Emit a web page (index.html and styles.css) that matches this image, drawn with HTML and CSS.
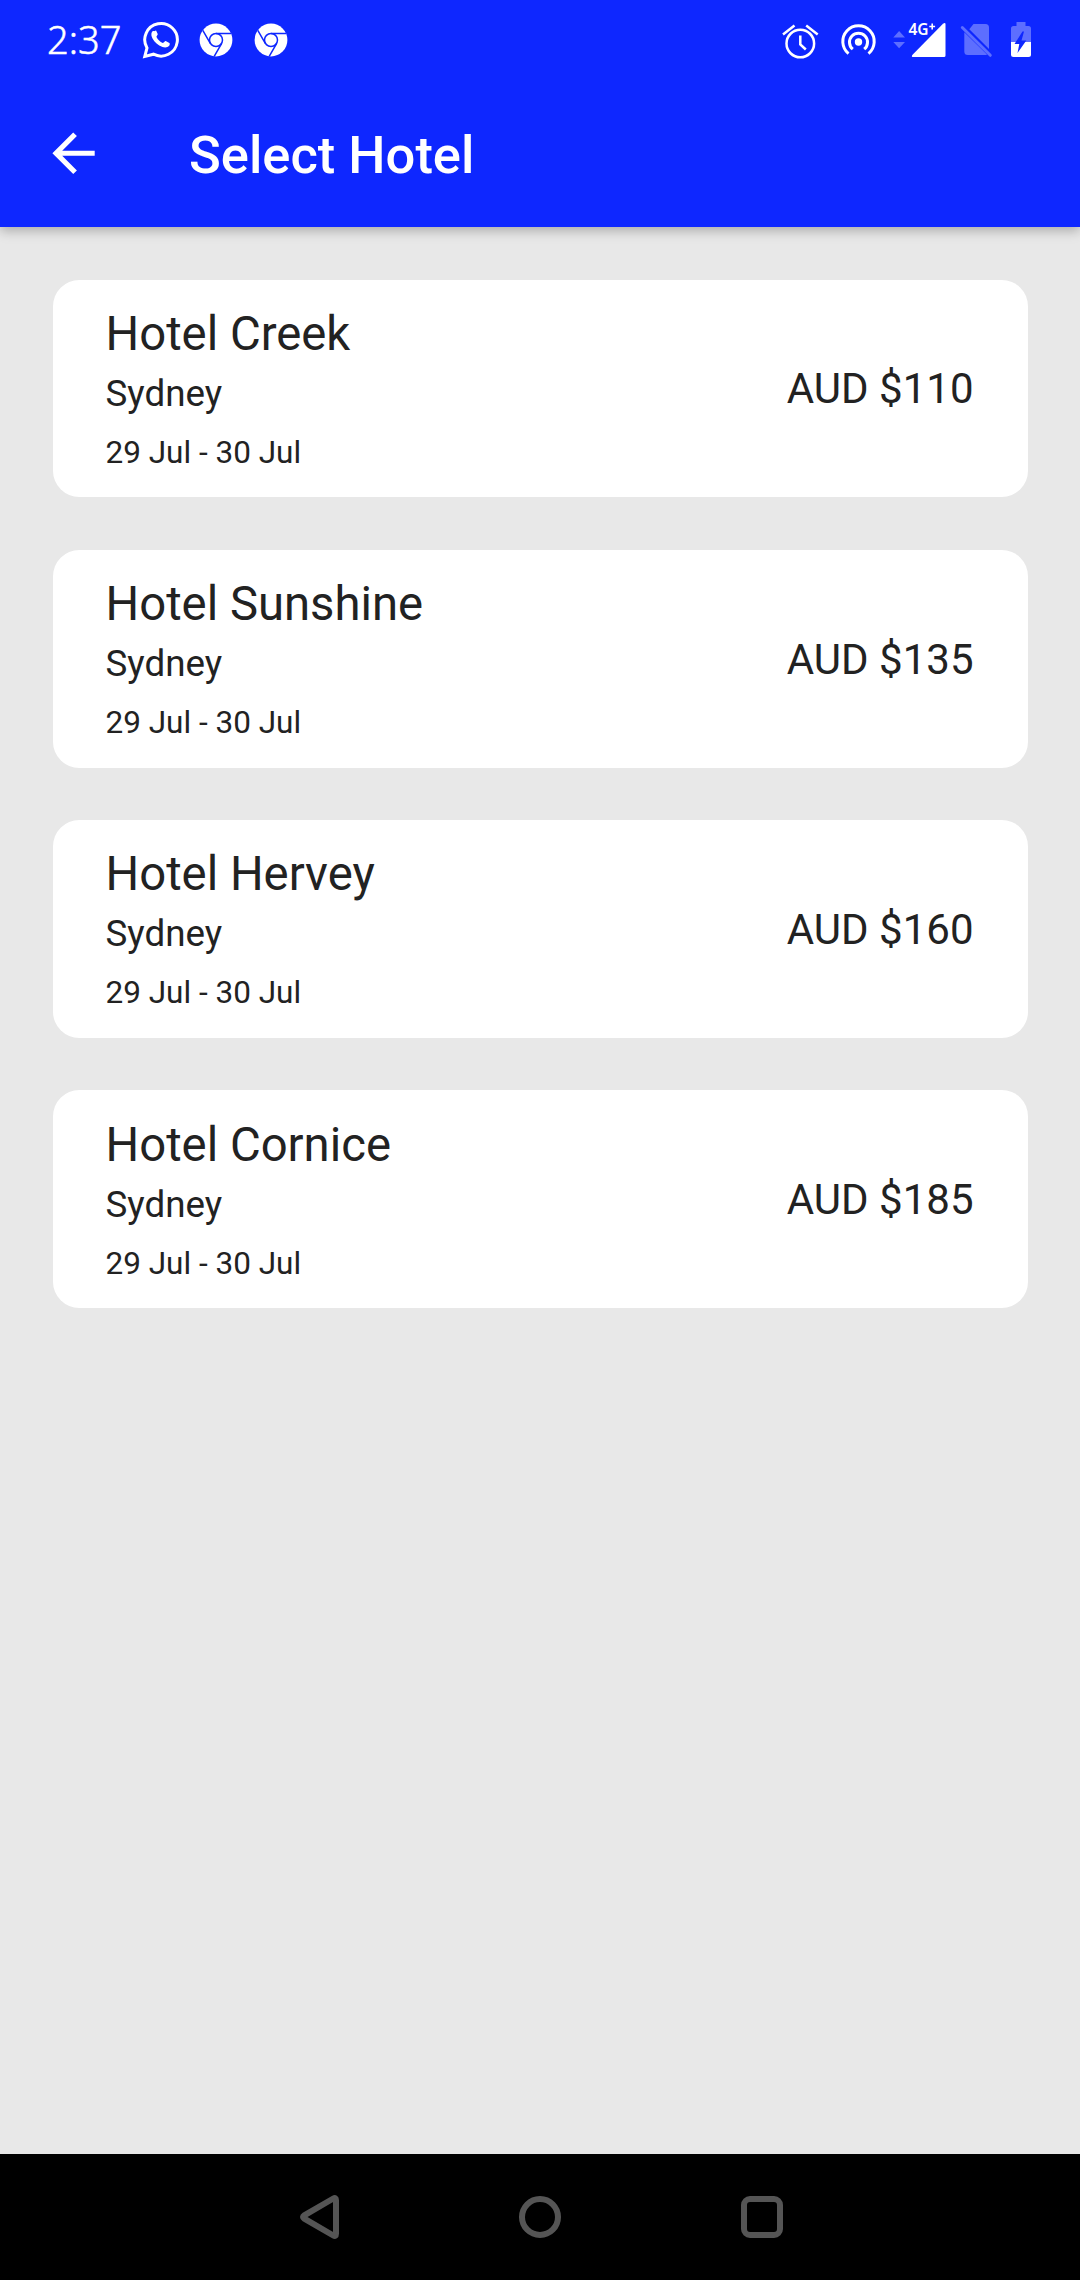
FILE: index.html
```html
<!DOCTYPE html>
<html lang="en">
<head>
<meta charset="utf-8">
<title>Select Hotel</title>
<link rel="stylesheet" href="styles.css">
</head>
<body>
<div class="screen">
  <header class="top">
    <div class="status">
      <span class="clock">2:37</span>
      <svg class="whatsapp" width="38" height="38" viewBox="0 0 38 38"><path d="M2.800 35.400 5 27A16.300 16.300 0 1 1 11.500 33.200Z" fill="none" stroke="#fff" stroke-width="3"/><path d="M12.700 10.200c-.6-.6-2.300-.2-2.700.6-1.200 2.400-.6 4.600.5 6.600 2.200 4 5.400 6.800 10 8.500 2.500.9 5.100.6 6.600-1.100.7-.8.900-2.500.3-2.900l-3.700-1.800c-.8-.3-2 2.100-2.900 1.800-2.900-1.300-4.900-3.200-6.300-6-.3-.7 1.500-2.200 1.200-3l-1.500-3.200c-.3-.5-1.100.1-1.500.5Z" fill="#fff"/></svg>
      <svg class="chrome" width="34" height="34" viewBox="0 0 34 34"><circle cx="17" cy="17" r="16.400" fill="#fff"/><g fill="none" stroke="#0e27ff" stroke-width="1.500"><circle cx="17" cy="17" r="6.500"/><path d="M17 10.500H32M11.300 20.300 3.800 7.300M22.700 20.300 15.200 33.300"/></g></svg>
      <svg class="chrome" width="34" height="34" viewBox="0 0 34 34"><circle cx="17" cy="17" r="16.400" fill="#fff"/><g fill="none" stroke="#0e27ff" stroke-width="1.500"><circle cx="17" cy="17" r="6.500"/><path d="M17 10.500H32M11.300 20.300 3.800 7.300M22.700 20.300 15.200 33.300"/></g></svg>
      <svg class="system" width="252" height="64" viewBox="780 8 252 64">
        <g fill="none" stroke="#fff" stroke-width="2.500"><circle cx="800.300" cy="43.500" r="13.800"/><path d="M800.300 35.500V44.500L805.800 49.500M783 34.500 794.500 25.500M817.700 34.500 806.200 25.500"/></g>
        <circle cx="858.500" cy="42" r="3.700" fill="#fff"/>
        <g fill="none" stroke="#fff" stroke-width="3"><path d="M852.800 49.200A9 9 0 1 1 864.200 49.200"/><path d="M848.500 53.600A15.700 15.700 0 1 1 868.500 53.600"/></g>
        <g fill="#5d6eff"><path d="M893.300 37.500H905L899.100 31ZM893.300 42H905L899.100 48.300Z"/><path d="M973.500 24H985.500Q989 24 989 27.500V49L969.300 29.300ZM964.300 32.300 987 54.500Q986.500 55 985 55H967.800Q964.300 55 964.300 51.500Z"/><path d="M962.300 27.500 990.300 55.300" stroke="#5d6eff" stroke-width="3" stroke-linecap="round"/><path d="M1011 42V28.500Q1011 26 1013.500 26H1016.500V22H1025.500V26H1028.500Q1031 26 1031 28.500V42Z"/></g>
        <path d="M943 23.800Q945.500 22 945.500 24.500V55.500Q945.500 57 944 57H913.300Q911 57 912.300 55Z" fill="#fff"/>
        <path d="M1011 42H1031V54.500Q1031 57 1028.500 57H1013.500Q1011 57 1011 54.500Z" fill="#fff"/>
        <path d="M1022.500 31.500 1014.500 44H1019.300L1017.500 53 1026.300 40.500H1021.500L1024 31.500Z" fill="#0e27ff"/>
        <text class="network" x="908.500" y="34.700">4G</text><path d="M929.300 26.500H935.100M932.200 23.400V29.600" stroke="#fff" stroke-width="1.600"/>
      </svg>
    </div>
    <div class="appbar">
      <svg class="back" width="43" height="43" viewBox="0 0 43 43"><path d="M42.700 18.800H10.200L24.900 4.100 21.200.400 .4 21.300 21.200 42.100 24.900 38.400 10.200 23.800H42.700Z" fill="#fff"/></svg>
      <h1 class="title">Select Hotel</h1>
    </div>
  </header>
  <main class="list">
    <article class="card"><div class="info"><h2 class="name">Hotel Creek</h2><p class="city">Sydney</p><p class="dates">29 Jul - 30 Jul</p></div><p class="price">AUD $110</p></article>
    <article class="card"><div class="info"><h2 class="name">Hotel Sunshine</h2><p class="city">Sydney</p><p class="dates">29 Jul - 30 Jul</p></div><p class="price">AUD $135</p></article>
    <article class="card"><div class="info"><h2 class="name">Hotel Hervey</h2><p class="city">Sydney</p><p class="dates">29 Jul - 30 Jul</p></div><p class="price">AUD $160</p></article>
    <article class="card"><div class="info"><h2 class="name">Hotel Cornice</h2><p class="city">Sydney</p><p class="dates">29 Jul - 30 Jul</p></div><p class="price">AUD $185</p></article>
  </main>
  <nav class="navbar">
    <svg width="44" height="44" viewBox="0 0 44 44"><path d="M40 5.200Q40 2 37.300 3.500L8.300 20.300Q5.700 22 8.300 23.700L37.300 40.500Q40 42 40 38.800Z"/></svg>
    <svg width="44" height="44" viewBox="0 0 44 44"><circle cx="22" cy="22" r="18"/></svg>
    <svg width="44" height="44" viewBox="0 0 44 44"><rect x="4" y="4" width="36" height="36" rx="6"/></svg>
  </nav>
</div>
</body>
</html>
```
FILE: styles.css
```css
* { box-sizing: border-box; margin: 0; padding: 0; }
body { font-family: Roboto, sans-serif; color: #222; }
svg { display: block; flex: none; }
.screen { width: 1080px; height: 2280px; display: flex; flex-direction: column; background: #e8e8e8; }
.top { height: 227px; background: #0e27ff; color: #fff; box-shadow: 0 4px 11px rgba(0, 0, 0, .26); }
.status { height: 80px; display: flex; align-items: center; padding: 0 48px 0 47px; }
.clock { width: 95px; font: 300 38px/78px "Noto Sans", sans-serif; padding-bottom: 2px; -webkit-text-stroke: .5px #fff; }
.whatsapp { margin-right: 19px; }
.chrome { margin-right: 21px; }
.system { margin-left: auto; }
.network { font: 600 15.500px "Noto Sans", sans-serif; fill: #fff; }
.appbar { height: 147px; display: flex; align-items: center; padding: 0 52px; }
.back { margin-right: 94px; }
.title { font-weight: 500; font-size: 52.500px; line-height: 62px; padding-top: 3px; }
.list { flex: 1; display: flex; flex-direction: column; gap: 52.500px; padding: 52.500px 52.500px 0; }
.card { height: 217.750px; display: flex; justify-content: space-between; align-items: center; padding: 1px 54px 0 53px; border-radius: 26.250px; background: #fff; }
.name { font-weight: 400; font-size: 47.250px; line-height: 55px; margin-bottom: 10px; }
.city { font-size: 36.750px; line-height: 43px; margin-bottom: 19px; }
.dates { font-size: 31.500px; line-height: 37px; }
.price { font-size: 42px; line-height: 50px; padding-top: 1px; }
.navbar { height: 126px; display: flex; justify-content: center; align-items: center; gap: 178px; background: #000; }
.navbar svg { fill: none; stroke: #555; stroke-width: 6; }
```
